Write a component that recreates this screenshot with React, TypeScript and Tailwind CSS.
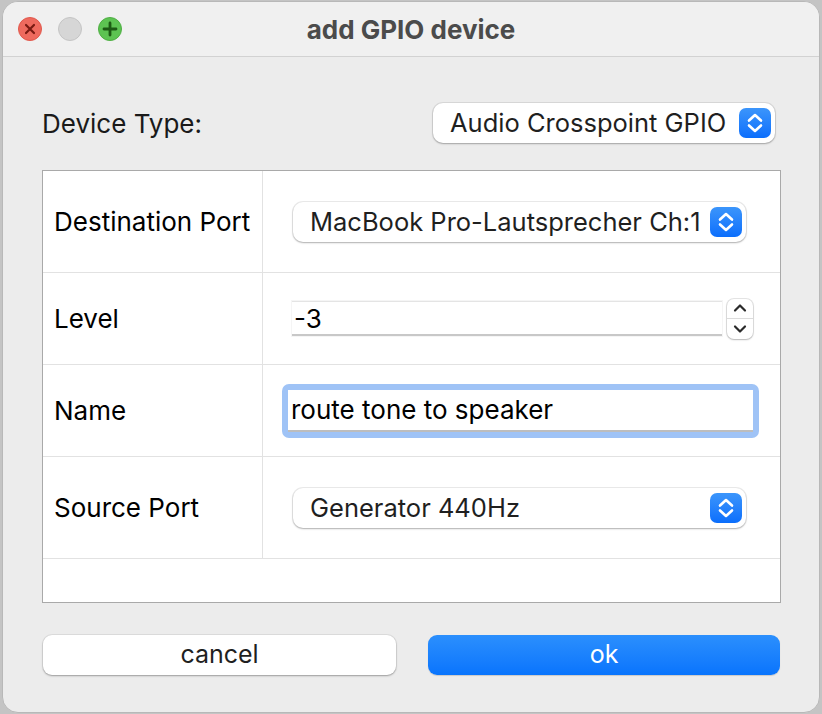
import React from "react"

const font = { fontFamily: "Inter, 'Noto Sans', sans-serif" }

function BlueStepper() {
  return (
    <div className="flex h-[30px] w-[32px] shrink-0 items-center justify-center rounded-[7px] bg-gradient-to-b from-[#3b95fb] to-[#0a6efc]">
      <svg width="32" height="30" viewBox="0 0 32 30" fill="none">
        <path d="M10 12.5 L16 7 L22 12.5" stroke="white" strokeWidth="2.6" strokeLinecap="round" strokeLinejoin="round" />
        <path d="M10 17.5 L16 23 L22 17.5" stroke="white" strokeWidth="2.6" strokeLinecap="round" strokeLinejoin="round" />
      </svg>
    </div>
  )
}

function Combo({ value, width }: { value: string; width: string }) {
  return (
    <div
      className={`flex h-[40px] ${width} items-center justify-between rounded-[10px] bg-white pl-[17px] pr-[4px] shadow-[0_0_0_1px_rgba(0,0,0,0.08),0_1px_2px_rgba(0,0,0,0.25)]`}
    >
      <span className="whitespace-nowrap text-[25.5px] leading-none text-[#1f1f1f]">{value}</span>
      <BlueStepper />
    </div>
  )
}

function SpinStepper() {
  return (
    <div className="flex h-[40px] w-[26px] flex-col rounded-[7px] bg-white shadow-[0_0_0_1px_rgba(0,0,0,0.1),0_1px_2px_rgba(0,0,0,0.2)]">
      <div className="flex flex-1 items-center justify-center border-b border-[#dcdcdc]">
        <svg width="16" height="10" viewBox="0 0 16 10" fill="none">
          <path d="M3 7.5 L8 2.5 L13 7.5" stroke="#2a2a2a" strokeWidth="2.2" strokeLinecap="round" strokeLinejoin="round" />
        </svg>
      </div>
      <div className="flex flex-1 items-center justify-center">
        <svg width="16" height="10" viewBox="0 0 16 10" fill="none">
          <path d="M3 2.5 L8 7.5 L13 2.5" stroke="#2a2a2a" strokeWidth="2.2" strokeLinecap="round" strokeLinejoin="round" />
        </svg>
      </div>
    </div>
  )
}

function Row({ label, height, children }: { label: string; height: string; children?: React.ReactNode }) {
  return (
    <div className={`flex ${height} border-b border-[#e2e2e2]`}>
      <div className="flex w-[220px] shrink-0 items-center border-r border-[#e2e2e2] pl-[11px] text-[26px] text-black">
        {label}
      </div>
      <div className="flex flex-1 items-center">{children}</div>
    </div>
  )
}

export default function App() {
  return (
    <div className="h-[714px] w-[822px] bg-[#c4c4c4] pl-[2px] pr-[2px] pt-[1px] pb-[1px]" style={font}>
      <div className="flex h-full flex-col overflow-hidden rounded-[16px] border border-[#b8b8b8] bg-[#ececec]">
        {/* title bar */}
        <div className="grid h-[55px] shrink-0 grid-cols-[1fr_auto_1fr] items-center border-b border-[#d2d2d2] bg-[#f0f0f0]">
          <div className="flex gap-[16px] pl-[15px]">
            <div className="flex h-[24px] w-[24px] items-center justify-center rounded-full border border-[#e0584c] bg-[#ee6a5e]">
              <svg width="12" height="12" viewBox="0 0 12 12">
                <path d="M2 2 L10 10 M10 2 L2 10" stroke="#7a1a12" strokeWidth="2.2" strokeLinecap="round" />
              </svg>
            </div>
            <div className="h-[24px] w-[24px] rounded-full border border-[#c4c4c4] bg-[#d6d6d6]" />
            <div className="flex h-[24px] w-[24px] items-center justify-center rounded-full border border-[#4fae44] bg-[#5dc352]">
              <svg width="16" height="16" viewBox="0 0 16 16">
                <path d="M8 2 L8 14 M2 8 L14 8" stroke="#1d5a14" strokeWidth="2.8" strokeLinecap="round" />
              </svg>
            </div>
          </div>
          <div className="text-[26px] font-bold text-[#4b4b4b]">add GPIO device</div>
          <div />
        </div>

        {/* body */}
        <div className="flex flex-1 flex-col pl-[39px] pr-[38px]">
          <div className="mt-[46px] flex items-center justify-between pr-[6px]">
            <span className="text-[26px] text-[#1a1a1a]">Device Type:</span>
            <Combo value="Audio Crosspoint GPIO" width="w-[342px]" />
          </div>

          <div className="mt-[27px] flex h-[433px] flex-col border border-[#a9a9a9] bg-white">
            <Row label="Destination Port" height="h-[102px]">
              <div className="ml-[30px]">
                <Combo value="MacBook Pro-Lautsprecher Ch:1" width="w-[453px]" />
              </div>
            </Row>
            <Row label="Level" height="h-[92px]">
              <div className="ml-[29px] flex items-center gap-[5px]">
                <div className="flex h-[35px] w-[430px] items-center border-t border-[#e4e4e4] border-b-2 border-b-[#c8c8c8] bg-white pl-[2px] text-[26px] text-black shadow-[0_0_0_1px_rgba(0,0,0,0.04)]">
                  -3
                </div>
                <SpinStepper />
              </div>
            </Row>
            <Row label="Name" height="h-[92px]">
              <div className="ml-[19px] rounded-[7px] bg-[#9fc3f6] p-[6px]">
                <div className="flex h-[42px] w-[465px] items-center border-b-2 border-[#bdbdbd] bg-white pl-[3px] text-[26px] text-black">
                  route tone to speaker
                </div>
              </div>
            </Row>
            <Row label="Source Port" height="h-[102px]">
              <div className="ml-[30px]">
                <Combo value="Generator 440Hz" width="w-[453px]" />
              </div>
            </Row>
            <div className="flex-1" />
          </div>

          <div className="mt-[32px] flex gap-[32px] pl-[1px]">
            <button className="flex h-[40px] w-[353px] items-center justify-center rounded-[9px] bg-white text-[25px] text-[#1f1f1f] shadow-[0_0_0_1px_rgba(0,0,0,0.06),0_1px_2px_rgba(0,0,0,0.3)]">
              cancel
            </button>
            <button className="flex h-[40px] w-[352px] items-center justify-center rounded-[9px] bg-gradient-to-b from-[#2b8ffd] to-[#0874fd] text-[25px] text-white shadow-[0_1px_1px_rgba(0,0,0,0.15)]">
              ok
            </button>
          </div>
        </div>
      </div>
    </div>
  )
}
